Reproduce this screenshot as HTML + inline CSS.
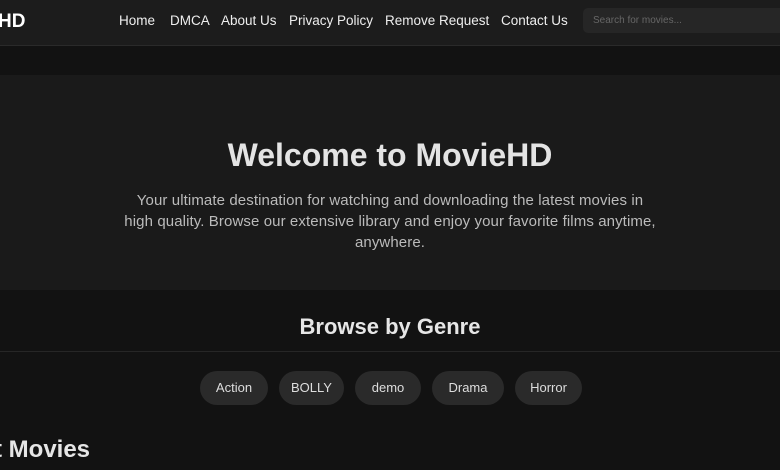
<!DOCTYPE html>
<html><head><meta charset="utf-8"><style>
*{margin:0;padding:0;box-sizing:border-box}
body{width:780px;height:470px;overflow:hidden;background:#121212;font-family:"Liberation Sans",sans-serif;color:#fff;position:relative}
.hdr{position:absolute;top:0;left:0;width:780px;height:46px;background:#1c1c1c;border-bottom:1px solid #2a2a2a}
.logo{position:absolute;left:-2px;top:11px;font-weight:bold;font-size:19px}
.nav{position:absolute;top:13px;font-size:13.5px;color:#eee}
.search{position:absolute;left:583px;top:8px;width:210px;height:25px;background:#262626;border-radius:5px;color:#666;font-size:10px;padding:7px 10px}
.hero{position:absolute;top:75px;left:0;width:780px;height:215px;background:#1a1a1a;text-align:center}
.hero h1{position:absolute;top:62px;width:100%;font-size:32px;color:#e4e4e4}
.hero p{position:absolute;top:115px;left:0;width:780px;font-size:15px;letter-spacing:0.1px;line-height:21px;color:#bbb}
h2{position:absolute;top:314px;width:100%;text-align:center;font-size:22px;color:#e6e6e6}
.line{position:absolute;top:351px;left:0;width:780px;height:1px;background:#262626}
.pill{position:absolute;top:371px;height:34px;background:#2a2a2a;border-radius:17px;font-size:13px;color:#ddd;text-align:center;line-height:34px}
h3{position:absolute;top:436px;left:-6px;font-size:24px;color:#e6e6e6}
</style></head><body>
<div class="hdr">
<div class="logo">HD</div>
<span class="nav" style="left:119px">Home</span>
<span class="nav" style="left:170px">DMCA</span>
<span class="nav" style="left:221px">About Us</span>
<span class="nav" style="left:289px">Privacy Policy</span>
<span class="nav" style="left:385px">Remove Request</span>
<span class="nav" style="left:501px">Contact Us</span>
<div class="search">Search for movies...</div>
</div>
<div class="hero">
<h1>Welcome to MovieHD</h1>
<p>Your ultimate destination for watching and downloading the latest movies in<br>high quality. Browse our extensive library and enjoy your favorite films anytime,<br>anywhere.</p>
</div>
<h2>Browse by Genre</h2>
<div class="line"></div>
<div class="pill" style="left:200px;width:68px">Action</div>
<div class="pill" style="left:279px;width:65px">BOLLY</div>
<div class="pill" style="left:355px;width:66px">demo</div>
<div class="pill" style="left:432px;width:72px">Drama</div>
<div class="pill" style="left:515px;width:67px">Horror</div>
<h3>t Movies</h3>
</body></html>
